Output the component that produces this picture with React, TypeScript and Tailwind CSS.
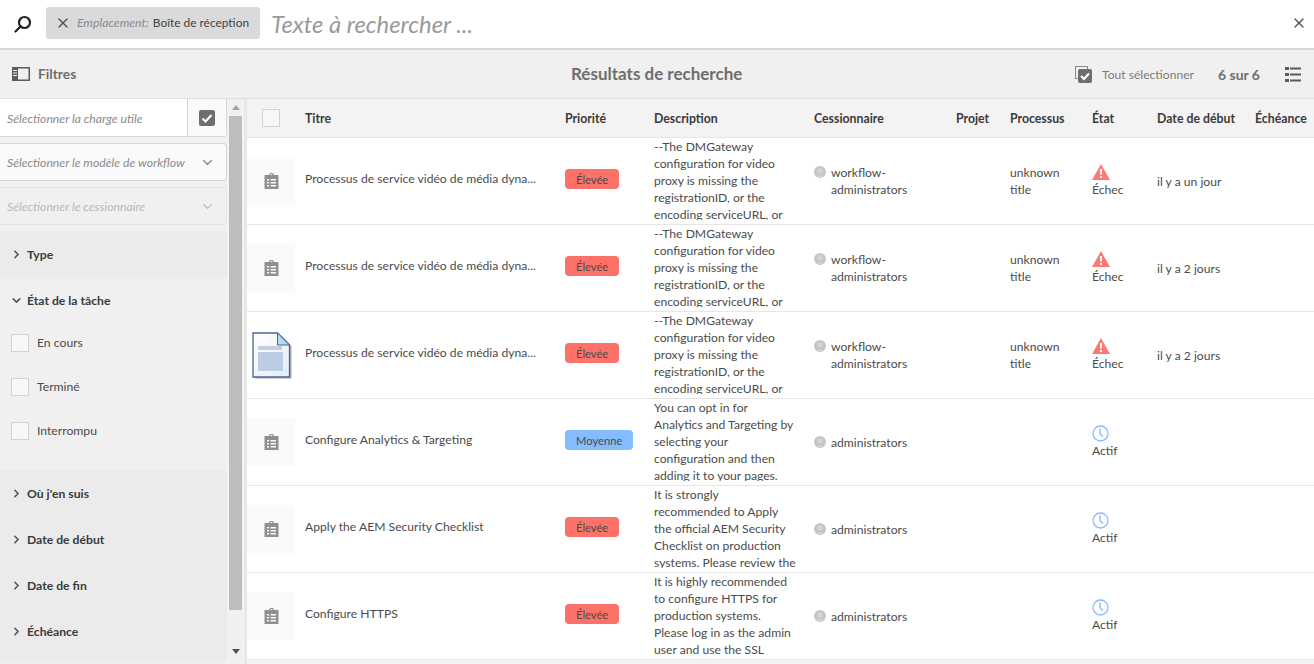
import React from 'react';
import { ChevronDown, ChevronRight, X } from 'lucide-react';

const DM_LINES = [
  '--The DMGateway',
  'configuration for video',
  'proxy is missing the',
  'registrationID, or the',
  'encoding serviceURL, or',
];

const ROWS = [
  { title: 'Processus de service vidéo de média dyna...', prio: 'Élevée', desc: DM_LINES, owner: ['workflow-', 'administrators'], proc: true, state: 'fail', date: 'il y a un jour', thumb: 'task' },
  { title: 'Processus de service vidéo de média dyna...', prio: 'Élevée', desc: DM_LINES, owner: ['workflow-', 'administrators'], proc: true, state: 'fail', date: 'il y a 2 jours', thumb: 'task' },
  { title: 'Processus de service vidéo de média dyna...', prio: 'Élevée', desc: DM_LINES, owner: ['workflow-', 'administrators'], proc: true, state: 'fail', date: 'il y a 2 jours', thumb: 'doc' },
  {
    title: 'Configure Analytics & Targeting', prio: 'Moyenne',
    desc: ['You can opt in for', 'Analytics and Targeting by', 'selecting your', 'configuration and then', 'adding it to your pages.'],
    owner: ['administrators'], proc: false, state: 'active', date: '', thumb: 'task',
  },
  {
    title: 'Apply the AEM Security Checklist', prio: 'Élevée',
    desc: ['It is strongly', 'recommended to Apply', 'the official AEM Security', 'Checklist on production', 'systems. Please review the'],
    owner: ['administrators'], proc: false, state: 'active', date: '', thumb: 'task',
  },
  {
    title: 'Configure HTTPS', prio: 'Élevée',
    desc: ['It is highly recommended', 'to configure HTTPS for', 'production systems.', 'Please log in as the admin', 'user and use the SSL'],
    owner: ['administrators'], proc: false, state: 'active', date: '', thumb: 'task',
  },
];

function TaskIcon() {
  return (
    <svg width="15" height="16" viewBox="0 0 15 16">
      <path fill="#8f8f8f" fillRule="evenodd" d="M5 2 C5 .6 6 0 7.500 0 S10 .6 10 2 H14.500 V16 H.5 V2 Z M6.300 2 H8.700 C8.700 1.300 8.200 1 7.500 1 S6.300 1.300 6.300 2 Z M3 6 V7.500 H5 V6 Z M6.500 6 V7.500 H12 V6 Z M3 9 V10.500 H5 V9 Z M6.500 9 V10.500 H12 V9 Z M3 12 V13.500 H5 V12 Z M6.500 12 V13.500 H12 V12 Z" />
    </svg>
  );
}

function DocIcon() {
  return (
    <svg width="40" height="47" viewBox="0 0 40 47">
      <defs>
        <linearGradient id="docFill" x1="0" y1="0" x2="1" y2="1">
          <stop offset="0" stopColor="#c3cbe2" />
          <stop offset="1" stopColor="#b6cfe6" />
        </linearGradient>
        <linearGradient id="docPage" x1="0" y1="0" x2="1" y2="1">
          <stop offset="0" stopColor="#ffffff" />
          <stop offset="1" stopColor="#e4edf6" />
        </linearGradient>
      </defs>
      <path d="M3 3 H29 L39.500 14 V46.500 H3 Z" fill="#8a8a8a" opacity="0.7" />
      <path d="M1 1 H25.500 L37.500 13 V45 H1 Z" fill="url(#docPage)" stroke="#47659c" strokeWidth="1.300" />
      <path d="M25.500 1 V13 H37.500 Z" fill="#b9d9ee" stroke="#47659c" strokeWidth="1" />
      <rect x="6" y="14" width="24" height="4" fill="#c5cde2" />
      <rect x="6" y="20" width="25" height="19" fill="url(#docFill)" />
    </svg>
  );
}

function AlertIcon() {
  return (
    <svg width="18" height="16" viewBox="0 0 18 16">
      <path fill="#fb7b74" fillRule="evenodd" d="M9 0 L18 16 H0 Z M8 5 V10.500 H10 V5 Z M8 12 V14 H10 V12 Z" />
    </svg>
  );
}

function ClockIcon() {
  return (
    <svg width="17" height="17" viewBox="0 0 17 17" fill="none">
      <circle cx="8.500" cy="8.500" r="7.500" stroke="#88bbff" strokeWidth="1.300" />
      <path d="M8 3.500 V8.800 L11 11.500" stroke="#88bbff" strokeWidth="1.400" />
    </svg>
  );
}

function Avatar() {
  return (
    <svg className="shrink-0 mt-[2px]" width="12" height="12" viewBox="0 0 12 12">
      <circle cx="6" cy="6" r="6" fill="#c6c6c6" />
      <circle cx="6" cy="4.800" r="2.600" fill="#d4d4d4" />
      <path d="M2.500 11 C3 8.500 9 8.500 9.500 11 Z" fill="#d4d4d4" />
    </svg>
  );
}

function Check({ cls }: { cls: string }) {
  return <span className={`block w-[18px] h-[18px] border border-[#d3d3d3] ${cls}`} />;
}

function FilterHead({ label, open }: { label: string; open?: boolean }) {
  return (
    <div className="h-[46px] flex items-center pl-[10px] gap-[4px] text-[12.200px] font-bold text-[#3a3a3a]">
      {open ? <ChevronDown size={13} strokeWidth={3} className="text-[#555] shrink-0" /> : <ChevronRight size={13} strokeWidth={3} className="text-[#555] shrink-0" />}
      <span className="pt-[2px]">{label}</span>
    </div>
  );
}

function Sidebar() {
  return (
    <aside className="w-[247px] h-full flex shrink-0 border-r-[3px] border-[#e8e8e8] overflow-hidden">
      <div className="w-[227px] shrink-0 bg-[#f0f0f0]">
        <div className="h-[38px] flex bg-white border-b border-r border-[#d4d4d4] rounded-br-[4px]">
          <div className="flex-1 flex items-center pl-[7px] pt-[3px] italic text-[12.200px] text-[#8a8a8a]">Sélectionner la charge utile</div>
          <div className="w-[39px] border-l border-[#d4d4d4] flex items-center justify-center bg-[#fafafa]">
            <svg width="16" height="16" viewBox="0 0 16 16">
              <rect width="16" height="16" rx="2" fill="#6e6e6e" />
              <path d="M3.500 8.500 L6.500 11.500 L12.500 5" fill="none" stroke="#fff" strokeWidth="2.200" />
            </svg>
          </div>
        </div>
        <div className="mt-[6px] h-[38px] flex items-center justify-between pl-[7px] pr-[11px] bg-[#fafafa] border border-l-0 border-[#d4d4d4] rounded-r-[4px] italic text-[12.200px] text-[#8a8a8a]">
          <span className="pt-[2px]">Sélectionner le modèle de workflow</span>
          <ChevronDown size={15} strokeWidth={2.200} className="text-[#777]" />
        </div>
        <div className="mt-[6px] h-[38px] flex items-center justify-between pl-[7px] pr-[11px] bg-[#f0f0f0] border border-l-0 border-[#e4e4e4] rounded-r-[4px] italic text-[12.200px] text-[#b8b8b8]">
          <span className="pt-[2px]">Sélectionner le cessionnaire</span>
          <ChevronDown size={15} strokeWidth={2.200} className="text-[#bbb]" />
        </div>
        <div className="mt-[6px] bg-[#ebebeb]">
          <FilterHead label="Type" />
        </div>
        <FilterHead label="État de la tâche" open />
        <div className="-mt-[2px]">
          {['En cours', 'Terminé', 'Interrompu'].map((s) => (
            <div key={s} className="h-[44px] flex items-center pl-[11px] gap-[8px] text-[12.200px] text-[#4b4b4b]">
              <Check cls="bg-[#f7f7f7]" />
              <span>{s}</span>
            </div>
          ))}
        </div>
        <div className="mt-[17px] bg-[#ebebeb] pb-[7px]">
          {["Où j'en suis", 'Date de début', 'Date de fin', 'Échéance'].map((s) => (
            <FilterHead key={s} label={s} />
          ))}
        </div>
      </div>
      <div className="w-[13px] ml-[2px] shrink-0 flex flex-col items-center bg-[#f0f0f0]">
        <span className="h-[17px] flex items-center text-[#a3a3a3]">
          <svg width="8" height="5" viewBox="0 0 8 5"><path d="M4 0 L8 5 H0 Z" fill="currentColor" /></svg>
        </span>
        <span className="w-full h-[494px] bg-[#bdbdbd] shrink-0" />
        <span className="mt-[36px] h-[10px] flex items-center text-[#505050]">
          <svg width="8" height="5" viewBox="0 0 8 5"><path d="M0 0 H8 L4 5 Z" fill="currentColor" /></svg>
        </span>
      </div>
    </aside>
  );
}

function ResultRow({ row }: { row: (typeof ROWS)[number] }) {
  return (
    <tr className="h-[87px] border-b border-[#e6e6e6] align-middle text-[12.150px] text-[#4b4b4b]">
      <td className="p-0">
        {row.thumb === 'task' ? (
          <div className="w-[48px] h-[48px] bg-[#fafafa] flex items-center justify-center">
            <TaskIcon />
          </div>
        ) : (
          <div className="pl-[5px] pt-[2px]"><DocIcon /></div>
        )}
      </td>
      <td className="p-0 whitespace-nowrap">
        <div className="-mt-[2px]">{row.title}</div>
      </td>
      <td className="p-0">
        <span className={`-mt-[6px] inline-flex h-[20px] items-center rounded-[4px] px-[11px] pt-[1px] leading-none text-[11.200px] ${row.prio === 'Moyenne' ? 'bg-[#85bbff]' : 'bg-[#fd7268]'}`}>
          {row.prio}
        </span>
      </td>
      <td className="p-0 align-top">
        <div className="h-[82px] overflow-hidden leading-[17.200px] whitespace-nowrap">
          {row.desc.map((l, i) => (
            <div key={i}>{l}</div>
          ))}
        </div>
      </td>
      <td className="p-0">
        <div className="pt-[1px] flex items-start gap-[5px] leading-[17px]">
          <Avatar />
          <span>
            {row.owner.map((l) => (
              <div key={l}>{l}</div>
            ))}
          </span>
        </div>
      </td>
      <td className="p-0" />
      <td className="p-0 leading-[17px]">
        {row.proc && (
          <div className="pt-[1px]">
            <div>unknown</div>
            <div>title</div>
          </div>
        )}
      </td>
      <td className="p-0">
        <div className="-mt-[1px] flex flex-col items-start leading-[17px]">
          <span className="h-[18px] pt-[1px]">{row.state === 'fail' ? <AlertIcon /> : <ClockIcon />}</span>
          <span>{row.state === 'fail' ? 'Échec' : 'Actif'}</span>
        </div>
      </td>
      <td className="p-0 pt-[4px] whitespace-nowrap">{row.date}</td>
      <td className="p-0" />
    </tr>
  );
}

export default function App() {
  const heads = ['Titre', 'Priorité', 'Description', 'Cessionnaire', 'Projet', 'Processus', 'État', 'Date de début', 'Échéance'];
  const widths = [58, 260, 89, 160, 142, 54, 82, 65, 98, 59];

  return (
    <div className="w-[1314px] h-[664px] overflow-hidden flex flex-col bg-[#f3f3f3] font-['Lato','Liberation_Sans',sans-serif]">
      <header className="h-[50px] shrink-0 bg-white border-b-2 border-[#d8d8d8] flex items-center">
        <div className="w-[46px] flex justify-center">
          <svg width="18" height="18" viewBox="0 0 18 18" fill="none" stroke="#222" strokeWidth="2.200">
            <circle cx="10.500" cy="7.500" r="5.500" />
            <path d="M6.500 11.500 L1.500 16.500" strokeLinecap="round" />
          </svg>
        </div>
        <div className="h-[32px] w-[214px] rounded-[3px] bg-[#dadada] flex items-center pl-[9px] -mt-[3px] whitespace-nowrap">
          <X size={16} strokeWidth={2} className="text-[#555] mr-[6px] shrink-0" />
          <span className="italic text-[12.200px] text-[#8a8a8a] mr-[4px] pt-[1px]">Emplacement:</span>
          <span className="text-[11.900px] text-[#444] pt-[1px]">Boîte de réception</span>
        </div>
        <div className="ml-[11px] text-[23.800px] italic text-[#9a9a9a] pt-[2px]">Texte à rechercher ...</div>
        <X size={16} strokeWidth={2} className="ml-auto mr-[7px] -mt-[2px] text-[#555]" />
      </header>

      <div className="h-[49px] shrink-0 bg-[#f0f0f0] border-b border-[#e0e0e0] flex items-center relative">
        <svg className="ml-[12px]" width="18" height="14" viewBox="0 0 18 14" fill="none">
          <rect x="0.750" y="0.750" width="16.500" height="12.500" stroke="#5b5b5b" strokeWidth="1.500" />
          <rect x="0" y="0" width="6" height="14" fill="#5b5b5b" />
          <path d="M1 3.500 H5 M1 6 H5 M1 8.500 H5" stroke="#f0f0f0" strokeWidth="1" />
        </svg>
        <span className="ml-[8px] text-[13.800px] font-bold text-[#6e6e6e]">Filtres</span>
        <span className="absolute left-[571px] text-[17px] font-bold text-[#6e6e6e]">Résultats de recherche</span>
        <svg className="ml-auto" width="17" height="17" viewBox="0 0 17 17">
          <rect x="0.500" y="0.500" width="12" height="12" fill="none" stroke="#8a8a8a" />
          <rect x="3" y="3" width="14" height="14" rx="2" fill="#6e6e6e" />
          <path d="M6 10 L9 13 L14 7.500" fill="none" stroke="#fff" strokeWidth="2" />
        </svg>
        <span className="ml-[10px] text-[12.100px] text-[#7a7a7a] pt-[2px]">Tout sélectionner</span>
        <span className="ml-[24px] text-[14px] font-bold text-[#6e6e6e]">6 sur 6</span>
        <svg className="ml-[25px] mr-[13px]" width="16" height="15" viewBox="0 0 16 15" fill="#5b5b5b">
          <rect x="0" y="0" width="4" height="3" />
          <rect x="5" y="0.500" width="11" height="2" />
          <rect x="0" y="6" width="4" height="3" />
          <rect x="5" y="6.500" width="11" height="2" />
          <rect x="0" y="12" width="4" height="3" />
          <rect x="5" y="12.500" width="11" height="2" />
        </svg>
      </div>

      <div className="flex-1 flex min-h-0">
        <Sidebar />
        <main className="flex-1 min-w-0 bg-[#f3f3f3]">
          <table className="table-fixed w-[1067px] border-collapse bg-white">
            <colgroup>
              {widths.map((w, i) => (
                <col key={i} style={{ width: w }} />
              ))}
            </colgroup>
            <thead>
              <tr className="h-[38px] bg-[#f3f3f3] border-b border-[#e6e6e6] text-left text-[12.300px] font-bold text-[#3a3a3a]">
                <th className="p-0 pl-[15px]">
                  <Check cls="bg-[#f7f7f7]" />
                </th>
                {heads.map((h) => (
                  <th key={h} className="p-0 pt-[3px] font-bold whitespace-nowrap">{h}</th>
                ))}
              </tr>
            </thead>
            <tbody>
              {ROWS.map((r, i) => (
                <ResultRow key={i} row={r} />
              ))}
            </tbody>
          </table>
        </main>
      </div>
    </div>
  );
}
